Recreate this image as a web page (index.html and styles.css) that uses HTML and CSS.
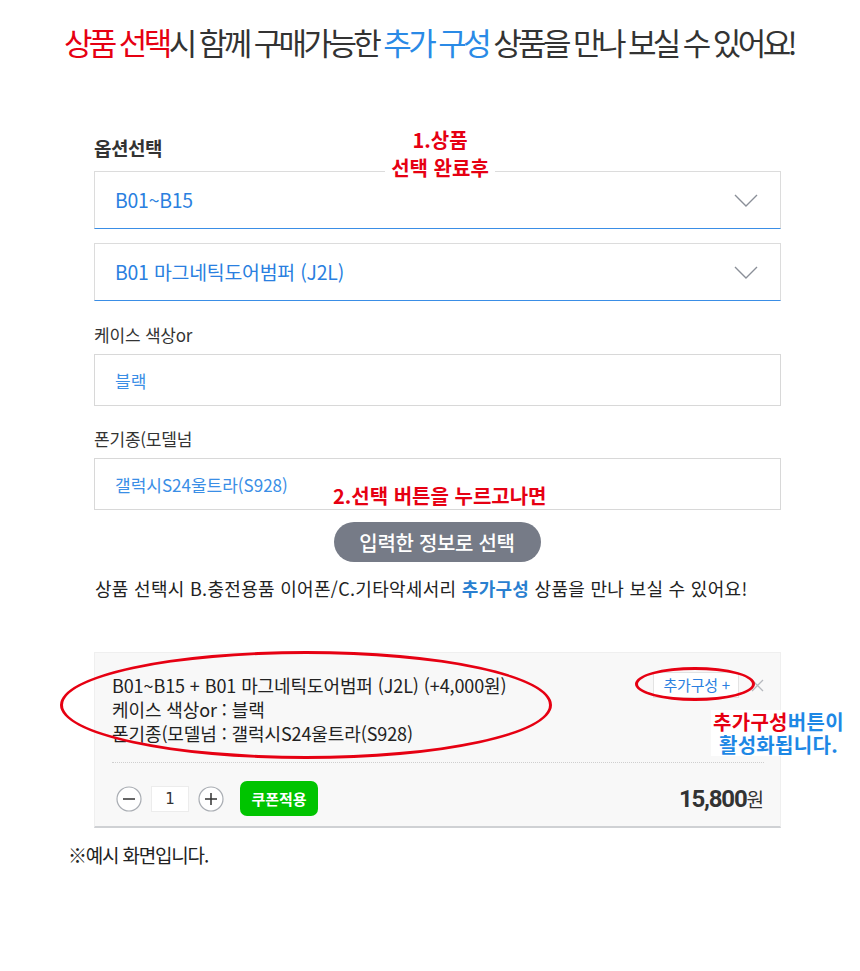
FILE: index.html
```html
<!DOCTYPE html>
<html lang="ko">
<head>
<meta charset="utf-8">
<title>추가구성 예시</title>
<link rel="stylesheet" href="styles.css">
</head>
<body>
<div class="page">
  <h1 class="title"><span class="red">상품 선택</span>시 함께 구매가능한 <span class="blue">추가 구성</span> 상품을 만나 보실 수 있어요!</h1>

  <div class="form">
    <div class="label bold">옵션선택</div>
    <div class="anno anno1">1.상품<br>선택 완료후</div>
    <div class="select">
      <span>B01~B15</span>
      <svg class="chev" width="24" height="14" viewBox="0 0 24 14"><path d="M1 1 L12 12 L23 1" fill="none" stroke="#8a8f98" stroke-width="1.4"/></svg>
    </div>
    <div class="select second">
      <span>B01 마그네틱도어범퍼 (J2L)</span>
      <svg class="chev" width="24" height="14" viewBox="0 0 24 14"><path d="M1 1 L12 12 L23 1" fill="none" stroke="#8a8f98" stroke-width="1.4"/></svg>
    </div>

    <div class="label">케이스 색상or</div>
    <div class="input">블랙</div>

    <div class="label">폰기종(모델넘</div>
    <div class="input-wrap">
      <div class="input">갤럭시S24울트라(S928)</div>
      <div class="anno anno2">2.선택 버튼을 누르고나면</div>
    </div>

    <div class="btn-row"><button class="pick">입력한 정보로 선택</button></div>

    <p class="info">상품 선택시 B.충전용품 이어폰/C.기타악세서리 <b class="blue2">추가구성</b> 상품을 만나 보실 수 있어요!</p>

    <div class="picked">
      <div class="picked-top">
        <div class="picked-text">
          <div>B01~B15 + B01 마그네틱도어범퍼 (J2L) (+4,000원)</div>
          <div>케이스 색상or : 블랙</div>
          <div>폰기종(모델넘 : 갤럭시S24울트라(S928)</div>
        </div>
        <div class="picked-actions">
          <span class="addbtn">추가구성 +</span>
          <svg class="close" width="13" height="13" viewBox="0 0 13 13"><path d="M1 1 L12 12 M12 1 L1 12" stroke="#b5b8bd" stroke-width="1.3" fill="none"/></svg>
        </div>
      </div>
      <div class="picked-bottom">
        <div class="qty">
          <span class="circ"><svg width="26" height="26" viewBox="0 0 26 26"><circle cx="13" cy="13" r="12" fill="#fff" stroke="#a9adb3" stroke-width="1.2"/><path d="M7 13 H19" stroke="#333" stroke-width="1.5"/></svg></span>
          <span class="num">1</span>
          <span class="circ"><svg width="26" height="26" viewBox="0 0 26 26"><circle cx="13" cy="13" r="12" fill="#fff" stroke="#a9adb3" stroke-width="1.2"/><path d="M7 13 H19 M13 7 V19" stroke="#333" stroke-width="1.5"/></svg></span>
          <span class="coupon">쿠폰적용</span>
        </div>
        <div class="price"><b>15,800</b>원</div>
      </div>

      <div class="ell ell-big"></div>
      <div class="ell ell-small"></div>
      <div class="anno3"><div class="a3l"><span class="red">추가구성</span>버튼이</div><div class="a3l">활성화됩니다.</div></div>
    </div>

    <p class="note">※예시 화면입니다.</p>
  </div>
</div>
</body>
</html>
```

FILE: styles.css
```css
* { box-sizing: border-box; }
html, body { margin: 0; padding: 0; background: #fff; }
body {
  font-family: "Noto Sans CJK KR", "Noto Sans", sans-serif;
  color: #222;
  width: 860px;
}
.page { padding-top: 18px; }
.title {
  margin: 0;
  text-align: center;
  font-size: 31px;
  font-weight: 400;
  letter-spacing: -3.6px;
  color: #333;
  line-height: 48px;
  padding-right: 2px;
}
.red { color: #e60012; }
.blue { color: #2a8ae6; }

.form {
  width: 687px;
  margin: 70px 0 0 94px;
  position: relative;
}
.label {
  font-size: 17px;
  color: #333;
  line-height: 24px;
  margin-bottom: 7px;
  letter-spacing: -0.2px;
}
.label.bold { font-size: 19px; font-weight: 700; margin-bottom: 11px; letter-spacing: -0.5px; }

.anno {
  position: absolute;
  color: #e60012;
  font-weight: 700;
  background: #fff;
  text-align: center;
}
.anno1 {
  top: -10px;
  left: 291px;
  width: 110px;
  font-size: 20px;
  line-height: 28px;
  letter-spacing: 0;
}
.select {
  height: 58px;
  border: 1px solid #dcdcdc;
  border-bottom: 1px solid #3a8ee6;
  display: flex;
  align-items: center;
  justify-content: space-between;
  padding: 0 22px 0 20px;
  color: #2a7fe0;
  font-size: 19.4px;
  letter-spacing: -0.2px;
}
.select span { margin-top: -2px; }
.select.second { margin-top: 14px; margin-bottom: 22px; }
.chev { margin-top: 2px; }

.input {
  height: 52px;
  border: 1px solid #d8d8d8;
  display: flex;
  align-items: center;
  padding-left: 20px;
  color: #3a8ee6;
  font-size: 17px;
  margin-bottom: 21px;
}
.input-wrap { position: relative; }
.input-wrap .input { margin-bottom: 0; }
.anno2 {
  left: 235px;
  top: 25px;
  font-size: 20px;
  line-height: 26px;
  padding: 0 4px;
  white-space: nowrap;
}
.btn-row { display: flex; justify-content: center; margin-top: 12px; }
.pick {
  border: 0;
  height: 40px;
  width: 207px;
  border-radius: 20px;
  background: #767b87;
  color: #fff;
  font-family: inherit;
  font-size: 20px;
  font-weight: 500;
  letter-spacing: -0.3px;
  padding: 0;
  margin-left: -1px;
}
.info {
  margin: 8px 0 0 1px;
  font-size: 18px;
  line-height: 36px;
  color: #222;
  letter-spacing: 0.3px;
}
.blue2 { color: #2a7fd0; }

.picked {
  position: relative;
  margin-top: 46px;
  background: #f8f8f8;
  border: 1px solid #efefef;
  border-bottom: 2px solid #cfd1d4;
  padding: 20px 16px 10px 17px;
}
.picked-top {
  display: flex;
  justify-content: space-between;
  align-items: flex-start;
  padding-bottom: 17px;
  border-bottom: 1px dotted #cfcfcf;
}
.picked-text {
  font-size: 18px;
  line-height: 24px;
  color: #222;
  letter-spacing: -0.1px;
}
.picked-actions { display: flex; align-items: center; gap: 12px; margin-top: -1px; }
.addbtn {
  background: #fff;
  border: 1px solid #e3e3e3;
  color: #2a7fe0;
  font-size: 15px;
  height: 26px;
  line-height: 24px;
  padding: 0 8px 0 9px;
  letter-spacing: -0.2px;
}
.close { margin-top: 1px; }
.picked-bottom {
  display: flex;
  align-items: center;
  justify-content: space-between;
  padding-top: 18px;
}
.qty { display: flex; align-items: center; }
.circ { display: flex; margin-left: 4px; }
.num {
  width: 38px;
  height: 26px;
  background: #fff;
  border: 1px solid #ececec;
  margin: 0 5px 0 9px;
  display: flex;
  align-items: center;
  justify-content: center;
  font-family: "DejaVu Sans", sans-serif;
  font-size: 15px;
  color: #333;
}
.coupon {
  margin-left: 16px;
  background: #00c400;
  color: #fff;
  font-weight: 700;
  font-size: 15px;
  height: 35px;
  width: 78px;
  border-radius: 7px;
  display: flex;
  align-items: center;
  justify-content: center;
}
.price {
  font-size: 19px;
  color: #333;
  margin-right: 0;
}
.price b {
  font-family: "Roboto", "Noto Sans", sans-serif;
  font-weight: 700;
  font-size: 24px;
  letter-spacing: -1.2px;
}

.ell {
  position: absolute;
  border: 3px solid #e60012;
  border-radius: 50%;
  pointer-events: none;
}
.ell-big { left: -35px; top: -2px; width: 492px; height: 108px; }
.ell-small { left: 540px; top: 14px; width: 120px; height: 34px; }
.anno3 {
  position: absolute;
  left: 616px;
  top: 57px;
  color: #1e88e5;
  font-weight: 700;
  font-size: 20px;
  text-align: center;
  letter-spacing: 0.3px;
  white-space: nowrap;
  background: #fff;
  padding: 0 2px;
}
.a3l { height: 23px; line-height: 23px; }
.note {
  margin: 14px 0 0 -26px;
  font-size: 19px;
  line-height: 26px;
  letter-spacing: -1.2px;
  color: #222;
}
```
